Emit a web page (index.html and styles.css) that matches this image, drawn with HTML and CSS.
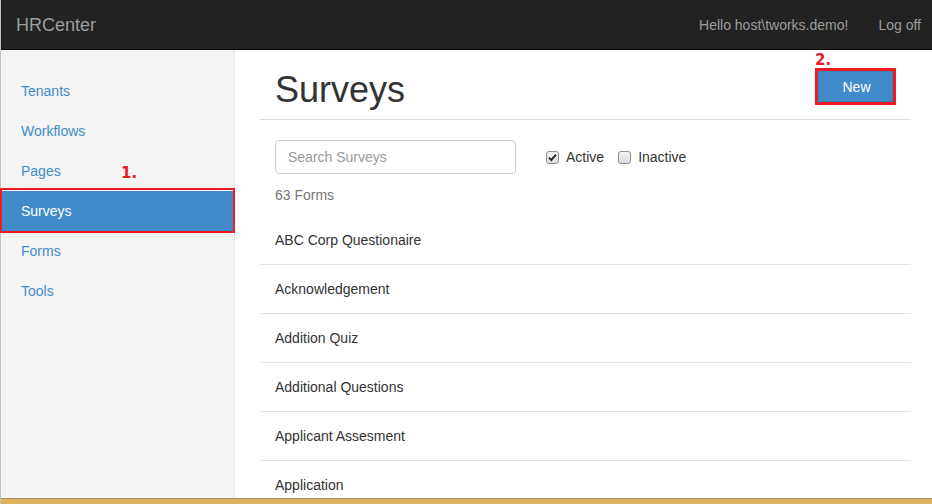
FILE: index.html
```html
<!DOCTYPE html>
<html lang="en">
<head>
  <meta charset="UTF-8" />
  <meta name="viewport" content="width=device-width, initial-scale=1.0" />
  <title>HRCenter - Surveys</title>
  <link rel="stylesheet" href="styles.css">
</head>
<body>
  <div class="page">
    <nav class="navbar">
      <a class="brand" href="#">HRCenter</a>
      <div class="nav-right">
        <a href="#">Hello host\tworks.demo!</a>
        <a href="#">Log off</a>
      </div>
    </nav>

    <div class="layout">
      <aside class="sidebar">
        <a class="side-link" href="#">Tenants</a>
        <a class="side-link" href="#">Workflows</a>
        <a class="side-link" href="#">Pages</a>
        <a class="side-link active" href="#">Surveys</a>
        <a class="side-link" href="#">Forms</a>
        <a class="side-link" href="#">Tools</a>
        <span class="step step-one">1.</span>
      </aside>

      <main class="content">
        <div class="page-header">
          <h1>Surveys</h1>
          <button class="btn-new">New<span class="step step-two">2.</span></button>
        </div>

        <div class="filters">
          <input class="search" type="text" placeholder="Search Surveys" />
          <label class="check">
            <span class="box">
              <svg viewBox="0 0 11 11" width="11" height="11"><path d="M2 5.6 L4.3 8 L9 2.6" fill="none" stroke="#2b2b2b" stroke-width="2" /></svg>
            </span>
            Active
          </label>
          <label class="check">
            <span class="box"></span>
            Inactive
          </label>
        </div>

        <div class="count">63 Forms</div>

        <ul class="form-list">
          <li>ABC Corp Questionaire</li>
          <li>Acknowledgement</li>
          <li>Addition Quiz</li>
          <li>Additional Questions</li>
          <li>Applicant Assesment</li>
          <li>Application</li>
        </ul>
      </main>
    </div>

    <div class="taskbar"></div>
  </div>
</body>
</html>
```

FILE: styles.css
```css
html, body {
  margin: 0;
  padding: 0;
  height: 100%;
  overflow: hidden;
}
body {
  font-family: "Liberation Sans", Arial, sans-serif;
  font-size: 14px;
  line-height: 20px;
  color: #333;
  background: #fff;
}
a {
  text-decoration: none;
}
.page {
  height: 504px;
  display: flex;
  flex-direction: column;
  border-left: 1px solid #c4c4c4;
}
.navbar {
  height: 49px;
  flex: none;
  display: flex;
  align-items: center;
  justify-content: space-between;
  background: #222;
  border-bottom: 1px solid #080808;
  padding: 0 11px 0 15px;
}
.brand {
  color: #9d9d9d;
  font-size: 18px;
}
.nav-right {
  display: flex;
  gap: 30px;
}
.nav-right a {
  color: #9d9d9d;
}
.layout {
  flex: 1;
  display: flex;
  min-height: 0;
}
.sidebar {
  position: relative;
  width: 233px;
  flex: none;
  background: #f4f4f4;
  border-right: 1px solid #e8e8e8;
  padding-top: 21px;
}
.side-link {
  display: block;
  padding: 10px 20px;
  color: #428bca;
}
.side-link.active {
  position: relative;
  background: #428bca;
  color: #fff;
}
.side-link.active::after {
  content: "";
  position: absolute;
  top: -3px;
  bottom: -2px;
  left: -1px;
  right: -1px;
  border: 2px solid #ed1c24;
}
.step {
  position: absolute;
  font-family: "DejaVu Sans", Verdana, sans-serif;
  font-weight: bold;
  font-size: 15px;
  line-height: 1;
  color: #ed1c24;
}
.step-one {
  left: 120px;
  top: 116px;
}
.content {
  flex: 1;
  padding: 0 21px 0 25px;
  overflow: hidden;
}
.page-header {
  display: flex;
  justify-content: space-between;
  align-items: flex-start;
  padding: 0 18px 0 15px;
  border-bottom: 1px solid #ddd;
}
.page-header h1 {
  margin: 20px 0 9px;
  font-size: 36px;
  font-weight: 500;
  line-height: 40px;
  color: #333;
}
.btn-new {
  position: relative;
  margin-top: 21px;
  width: 75px;
  height: 31px;
  padding: 0 0 0 2px;
  font-family: inherit;
  font-size: 14px;
  color: #fff;
  background: #428bca;
  border: 1px solid #3a80bd;
  outline: 3px solid #ed1c24;
  cursor: pointer;
}
.step-two {
  left: -4px;
  top: -19px;
}
.filters {
  display: flex;
  align-items: center;
  margin-top: 20px;
  padding: 0 15px;
}
.search {
  box-sizing: border-box;
  width: 241px;
  height: 34px;
  padding: 6px 12px;
  font-family: inherit;
  font-size: 14px;
  color: #555;
  border: 1px solid #ccc;
  border-radius: 4px;
  margin-right: 30px;
}
.search::placeholder {
  color: #999;
}
.check {
  display: flex;
  align-items: center;
  gap: 7px;
  margin-right: 14px;
  color: #333;
}
.box {
  box-sizing: border-box;
  width: 13px;
  height: 13px;
  display: flex;
  align-items: center;
  justify-content: center;
  border: 1px solid #8e8e8e;
  border-radius: 3px;
  background: linear-gradient(#f6f6f6, #dadada);
}
.count {
  margin-top: 11px;
  padding: 0 15px;
  color: #777;
}
.form-list {
  list-style: none;
  margin: 11px 0 0;
  padding: 0;
}
.form-list li {
  padding: 14px 15px;
  border-bottom: 1px solid #e2e2e2;
}
.taskbar {
  flex: none;
  height: 5px;
  background: #dfb25f;
  border-top: 1px solid #a3906c;
}
```
